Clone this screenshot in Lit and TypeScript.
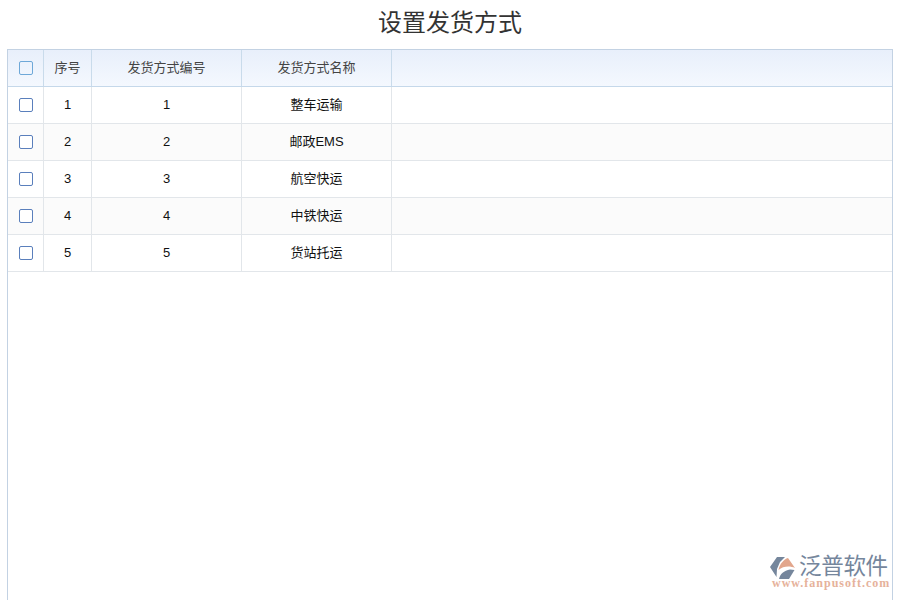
import { LitElement, html, css } from "lit";
import { customElement } from "lit/decorators.js";

const rows = [
  ["1", "1", "整车运输"],
  ["2", "2", "邮政EMS"],
  ["3", "3", "航空快运"],
  ["4", "4", "中铁快运"],
  ["5", "5", "货站托运"],
];

@customElement("app-root")
export class AppRoot extends LitElement {
  static styles = css`
    :host {
      display: block;
      position: relative;
      width: 900px;
      height: 600px;
      overflow: hidden;
      background: #fff;
      font-family: "Liberation Sans", "Noto Sans CJK SC", sans-serif;
    }
    h1 {
      margin: 0;
      height: 49px;
      line-height: 45px;
      text-align: center;
      font-size: 24px;
      font-weight: 400;
      color: #333;
    }
    .grid {
      box-sizing: border-box;
      margin-left: 7px;
      width: 886px;
      height: 551px;
      border: 1px solid #c3d2e3;
      border-bottom: 0;
    }
    .row {
      display: grid;
      grid-template-columns: 36px 48px 150px 150px 1fr;
      height: 37px;
      box-sizing: border-box;
      border-bottom: 1px solid #e2e6ea;
      font-size: 13px;
      color: #111;
    }
    .row.alt {
      background: #fbfbfb;
    }
    .row.head {
      background: linear-gradient(#e8effb, #f4f8fe);
      border-bottom-color: #c5d8ea;
      color: #444;
    }
    .cell {
      display: flex;
      align-items: center;
      justify-content: center;
      box-sizing: border-box;
      border-right: 1px solid #e2e6ea;
      padding-bottom: 1px;
    }
    .cell.cjk {
      padding-bottom: 3px;
    }
    .head .cell {
      border-right-color: #c9dbeb;
    }
    .cell:last-child {
      border-right: 0;
    }
    .box {
      box-sizing: border-box;
      width: 14px;
      height: 14px;
      border: 1px solid #5a7fbc;
      border-radius: 2px;
      background: #fff;
    }
    .head .box {
      border-color: #6ea8d8;
      background: transparent;
    }
    .logo {
      position: absolute;
      left: 770px;
      top: 556px;
      width: 122px;
      display: grid;
      grid-template-columns: 29px 1fr;
      grid-template-rows: 22px 11px;
    }
    .logo svg {
      display: block;
    }
    .brand {
      font-size: 22.500px;
      line-height: 22px;
      letter-spacing: -0.3px;
      color: #75869c;
      white-space: nowrap;
    }
    .url {
      grid-column: 1 / 3;
      padding-left: 2px;
      font-family: "Liberation Serif", serif;
      font-size: 12px;
      font-weight: 700;
      line-height: 11px;
      letter-spacing: 1px;
      color: #e6b29b;
      white-space: nowrap;
    }
  `;

  render() {
    return html`
      <h1>设置发货方式</h1>
      <div class="grid">
        <div class="row head">
          <div class="cell"><span class="box"></span></div>
          <div class="cell cjk">序号</div>
          <div class="cell cjk">发货方式编号</div>
          <div class="cell cjk">发货方式名称</div>
          <div class="cell"></div>
        </div>
        ${rows.map(
          (r, i) => html`
            <div class="row ${i % 2 ? "alt" : ""}">
              <div class="cell"><span class="box"></span></div>
              <div class="cell">${r[0]}</div>
              <div class="cell">${r[1]}</div>
              <div class="cell cjk">${r[2]}</div>
              <div class="cell"></div>
            </div>
          `
        )}
      </div>
      <div class="logo">
        <svg width="26" height="24" viewBox="0 0 26 24">
          <path d="M7 1H15L10 6 7 13 6.500 21 0 11Z" fill="#75869c" />
          <path d="M8.500 14C9.500 8 14 3 18 2L25 12C20 9.500 13 10 8.500 14Z" fill="#e2a68c" />
          <path d="M9 23C10 18 14 14.500 20 13.500L24.500 14 19 23Z" fill="#75869c" />
        </svg>
        <div class="brand">泛普软件</div>
        <div class="url">www.fanpusoft.com</div>
      </div>
    `;
  }
}
